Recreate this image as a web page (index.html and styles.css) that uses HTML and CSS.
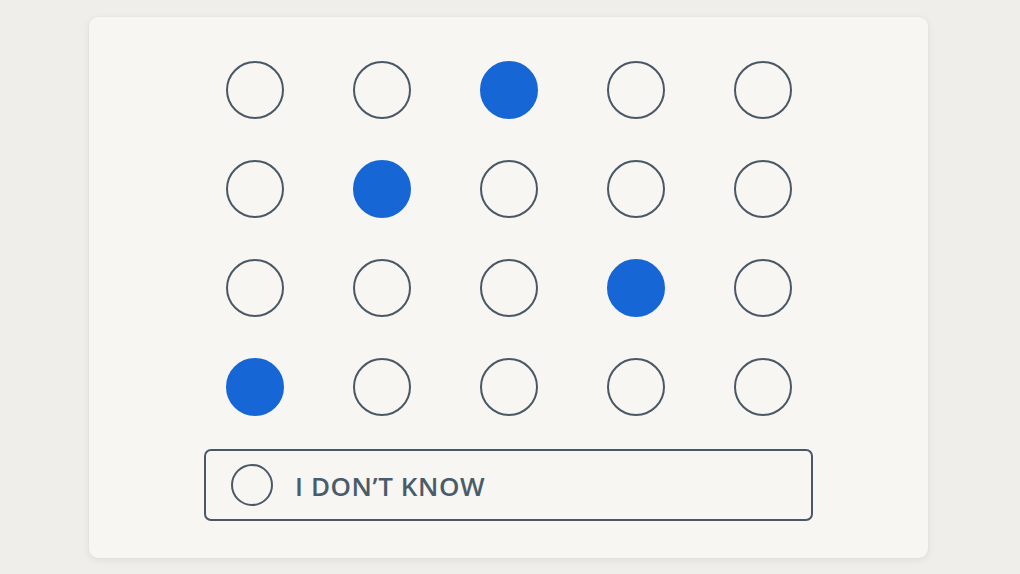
FILE: index.html
```html
<!DOCTYPE html>
<html lang="en">
<head>
<meta charset="utf-8">
<title>Grid</title>
<link rel="stylesheet" href="styles.css">
</head>
<body>
<div class="card">
  <div class="grid">
    <span class="dot"></span><span class="dot"></span><span class="dot on"></span><span class="dot"></span><span class="dot"></span>
    <span class="dot"></span><span class="dot on"></span><span class="dot"></span><span class="dot"></span><span class="dot"></span>
    <span class="dot"></span><span class="dot"></span><span class="dot"></span><span class="dot on"></span><span class="dot"></span>
    <span class="dot on"></span><span class="dot"></span><span class="dot"></span><span class="dot"></span><span class="dot"></span>
  </div>
  <div class="idk">
    <span class="idk-dot"></span>
    <span class="idk-label">I DON’T KNOW</span>
  </div>
</div>
</body>
</html>
```
FILE: styles.css
```css
html, body { margin: 0; padding: 0; }
body {
  width: 1020px;
  height: 574px;
  background: #efeeea;
  box-sizing: border-box;
  padding: 17px 0 0 89px;
  overflow: hidden;
}
.card {
  width: 839px;
  height: 541px;
  box-sizing: border-box;
  background: #f7f6f2;
  border-radius: 9px;
  box-shadow: 0 2px 8px rgba(0,0,0,0.07), 0 0 2px rgba(0,0,0,0.05);
  padding-top: 44px;
  display: flex;
  flex-direction: column;
  align-items: center;
}
.grid {
  display: grid;
  grid-template-columns: repeat(5, 58px);
  grid-auto-rows: 58px;
  column-gap: 69px;
  row-gap: 41px;
}
.dot {
  box-sizing: border-box;
  width: 58px;
  height: 58px;
  border-radius: 50%;
  border: 2px solid #4a5866;
}
.dot.on {
  background: #1766d6;
  border-color: #1766d6;
}
.idk {
  margin-top: 33px;
  width: 609px;
  height: 72px;
  box-sizing: border-box;
  border: 2px solid #4a5866;
  border-radius: 7px;
  display: flex;
  align-items: center;
  padding-left: 25px;
}
.idk-dot {
  box-sizing: border-box;
  width: 42px;
  height: 42px;
  border-radius: 50%;
  border: 2px solid #4a5866;
  flex: none;
}
.idk-label {
  margin-left: 22px;
  margin-top: 2px;
  font-family: "Open Sans", "Inter", sans-serif;
  font-weight: 600;
  font-size: 26px;
  letter-spacing: 0.6px;
  color: #4a5c6a;
}
```
